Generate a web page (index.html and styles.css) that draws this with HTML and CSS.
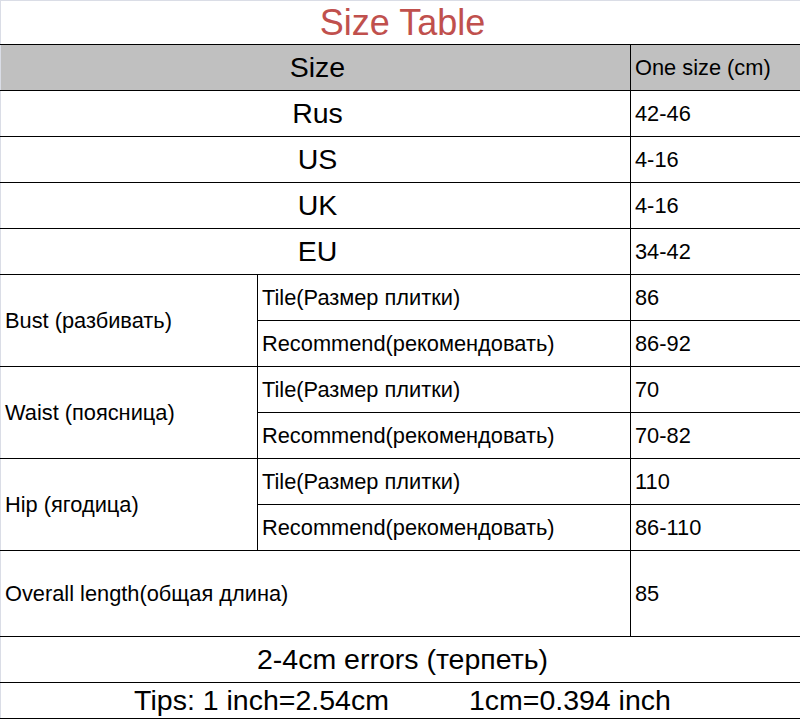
FILE: index.html
```html
<!DOCTYPE html>
<html>
<head>
<meta charset="utf-8">
<link rel="stylesheet" href="styles.css">
</head>
<body>
<table class="size-table">
  <colgroup>
    <col class="c1"><col class="c2"><col class="c3">
  </colgroup>
  <tr class="title-row"><td colspan="3" class="title">Size Table</td></tr>
  <tr class="row head"><td colspan="2" class="big">Size</td><td class="val">One size (cm)</td></tr>
  <tr class="row"><td colspan="2" class="big">Rus</td><td class="val">42-46</td></tr>
  <tr class="row"><td colspan="2" class="big">US</td><td class="val">4-16</td></tr>
  <tr class="row"><td colspan="2" class="big">UK</td><td class="val">4-16</td></tr>
  <tr class="row"><td colspan="2" class="big">EU</td><td class="val">34-42</td></tr>
  <tr class="row"><td rowspan="2" class="label">Bust (разбивать)</td><td class="val">Tile(Размер плитки)</td><td class="val">86</td></tr>
  <tr class="row"><td class="val">Recommend(рекомендовать)</td><td class="val">86-92</td></tr>
  <tr class="row"><td rowspan="2" class="label">Waist (поясница)</td><td class="val">Tile(Размер плитки)</td><td class="val">70</td></tr>
  <tr class="row"><td class="val">Recommend(рекомендовать)</td><td class="val">70-82</td></tr>
  <tr class="row"><td rowspan="2" class="label">Hip (ягодица)</td><td class="val">Tile(Размер плитки)</td><td class="val">110</td></tr>
  <tr class="row"><td class="val">Recommend(рекомендовать)</td><td class="val">86-110</td></tr>
  <tr class="tall"><td colspan="2" class="label">Overall length(общая длина)</td><td class="val">85</td></tr>
  <tr class="row"><td colspan="3" class="big">2-4cm errors (терпеть)</td></tr>
  <tr class="tips"><td colspan="3" class="big"><span class="tip">Tips: 1 inch=2.54cm</span><span class="tip">1cm=0.394 inch</span></td></tr>
</table>
</body>
</html>
```

FILE: styles.css
```css
html, body {
  margin: 0;
  padding: 0;
  background: #ffffff;
}

.size-table {
  width: 800px;
  table-layout: fixed;
  border-collapse: collapse;
  font-family: "Liberation Sans", Arial, sans-serif;
  color: #000000;
}

.c1 { width: 257px; }
.c2 { width: 373px; }
.c3 { width: 170px; }

.size-table td {
  border: 1px solid #000000;
  padding: 0 0 0 4px;
  vertical-align: middle;
  white-space: nowrap;
  overflow: hidden;
}

.size-table tr > td:first-child {
  border-left-color: #dadde6;
}

.title-row td {
  height: 43px;
  border-top-color: #dadde6;
  border-right-color: #dadde6;
}

.title {
  text-align: center;
  color: #c0504d;
  font-size: 36px;
  padding: 0 0 6px 0;
}

.row td {
  height: 45px;
}

.head td {
  background: #c0c0c0;
}

.tall td {
  height: 85px;
}

.tips td {
  height: 35px;
  border-bottom: 1px solid #000000;
}

.big {
  text-align: center;
  font-size: 28.5px;
  padding-left: 0;
}

.val,
.label {
  font-size: 21.8px;
  text-align: left;
}

.tip + .tip {
  margin-left: 80px;
}
```
